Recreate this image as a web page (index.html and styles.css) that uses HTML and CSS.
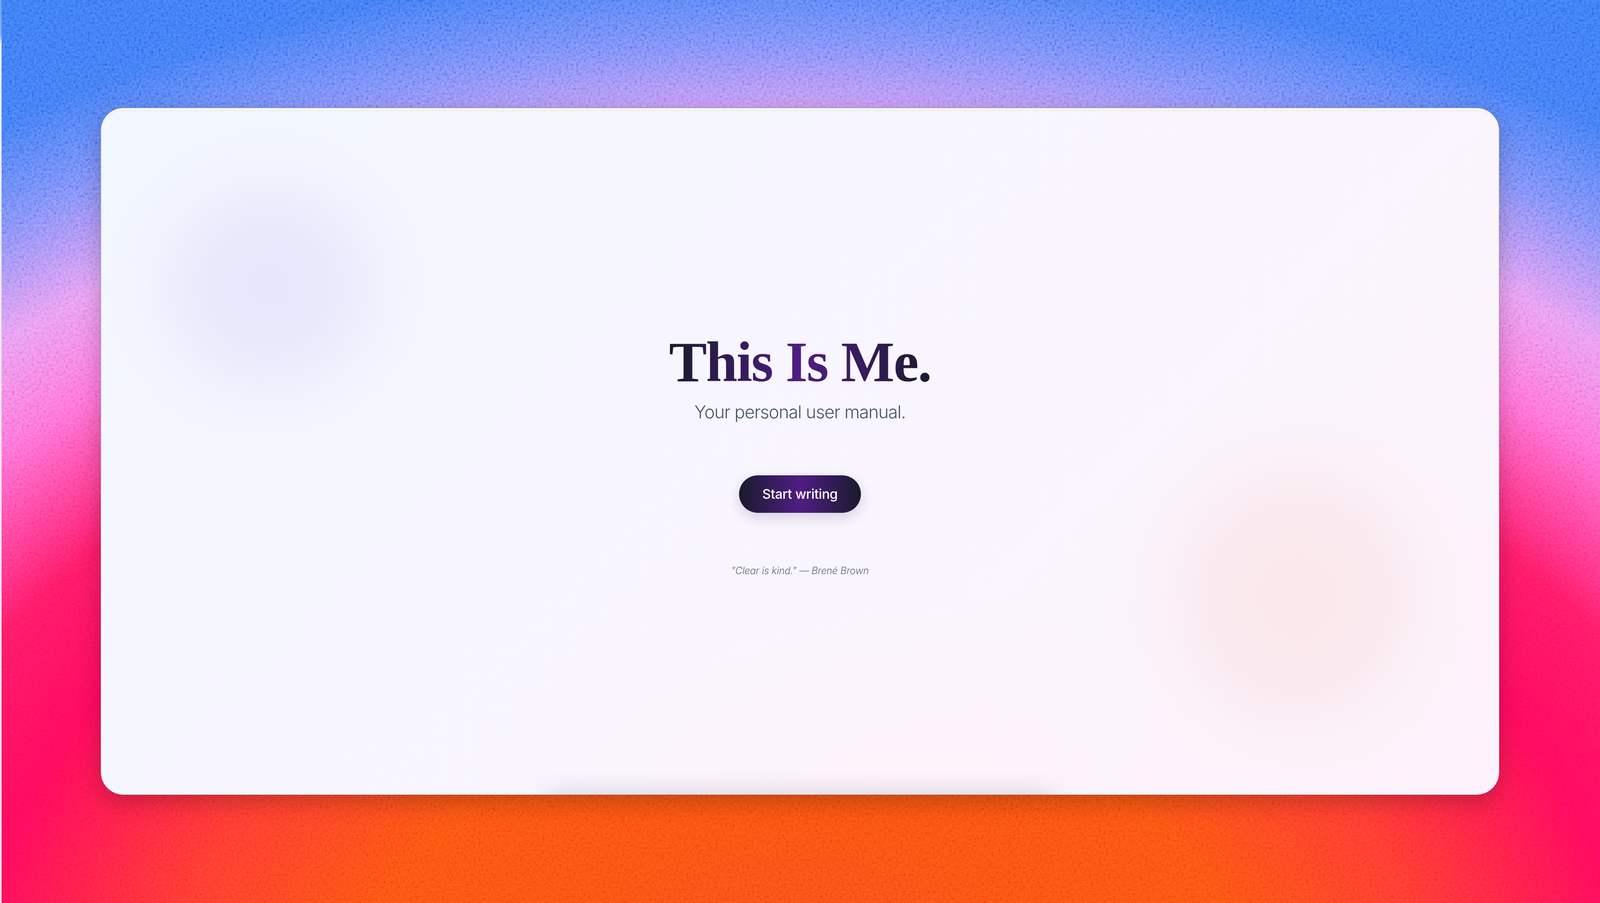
FILE: index.html
```html
<!DOCTYPE html>
<html lang="en">
<head>
    <meta charset="UTF-8">
    <meta name="viewport" content="width=device-width, initial-scale=1.0">
    <title>This Is Me.</title>
    <link rel="stylesheet" href="styles.css">
</head>
<body>

    <svg class="grain" width="100%" height="100%" aria-hidden="true">
        <filter id="grainFilter" x="0" y="0" width="100%" height="100%">
            <feTurbulence type="fractalNoise" baseFrequency="0.16" numOctaves="3"/>
            <feColorMatrix type="matrix" values="1.8 0 0 0 -0.4  1.8 0 0 0 -0.4  1.8 0 0 0 -0.4  0 0 0 0 1"/>
        </filter>
        <rect width="100%" height="100%" filter="url(#grainFilter)"/>
    </svg>

    <div class="edge-strip"></div>

    <main class="page">
        <section class="card">
            <div class="blob blob-blue"></div>
            <div class="blob blob-pink"></div>
            <div class="floor-shadow"></div>

            <div class="hero">
                <h1>This Is Me.</h1>
                <p class="subtitle">Your personal user manual.</p>
                <a href="#" class="start-btn">Start writing</a>
                <p class="quote">"Clear is kind." — Brené Brown</p>
            </div>
        </section>
    </main>

</body>
</html>
```

FILE: styles.css
```css
html, body {
    height: 100%;
}

body {
    position: relative;
    margin: 0;
    overflow: hidden;
    font-family: Inter, "Open Sans", sans-serif;
    background-color: #3b78f5;
    background-image: radial-gradient(ellipse 103.7% 129.8% at 50% 112.5%,
        #f94a22 0%, #fb5012 16%, #fc5212 27%, #ff3a30 38%, #ff0a5a 50%, #ff1a62 58%,
        #ff70d8 68%, #e89cf2 75%, #7c8cf8 83%, #4279f5 90%, #3b78f5 100%);
}

.grain {
    position: absolute;
    top: 0;
    left: 0;
    opacity: 0.22;
    mix-blend-mode: overlay;
}

.edge-strip {
    position: absolute;
    top: 0;
    bottom: 0;
    left: 0;
    width: 4px;
    background: linear-gradient(180deg, #6ea8ff 0, #7fb0ff 90px, #e8eefc 110px, #f3e8f8 50%, #fde6ee 100%);
}

.page {
    position: relative;
    box-sizing: border-box;
    height: 100%;
    padding: 276px 6.31% 277px;
    display: flex;
}

.card {
    position: relative;
    flex: 1;
    display: flex;
    align-items: center;
    justify-content: center;
    overflow: hidden;
    border-radius: 58px;
    background:
        radial-gradient(ellipse 30% 30% at 58% 100%, #fdf3fb 0%, rgba(253, 243, 251, 0) 100%),
        linear-gradient(135deg, #f1f7ff 0%, #f6f6ff 30%, #f9f5fe 60%, #fdf2fb 100%);
    border-top: 7px solid #f8f8f8;
    box-shadow: inset 0 1px 0 #dedfe2;
    outline: 2px solid rgba(90, 90, 100, 0.35);
    outline-offset: -1px;
}

.page::before {
    content: "";
    position: absolute;
    top: 276px;
    right: 6.31%;
    bottom: 277px;
    left: 6.31%;
    border-radius: 58px;
    box-shadow: 0 20px 60px rgba(0, 0, 0, 0.22);
}

.blob {
    position: absolute;
    border-radius: 50%;
}

.blob-blue {
    top: 20px;
    left: -0.5%;
    width: 25%;
    height: 860px;
    background: radial-gradient(closest-side, #e6e7fb 0%, #e8e9fb 35%, rgba(240, 240, 253, 0.6) 70%, rgba(246, 246, 255, 0) 100%);
}

.blob-pink {
    top: 720px;
    right: 0.4%;
    width: 28%;
    height: 1050px;
    background: radial-gradient(closest-side, #fae8eb 0%, #fae9ee 40%, rgba(251, 240, 246, 0.6) 72%, rgba(252, 243, 250, 0) 100%);
}

.floor-shadow {
    position: absolute;
    bottom: -30px;
    left: 32%;
    right: 32%;
    height: 30px;
    box-shadow: 0 0 60px rgba(60, 60, 80, 0.28);
}

.hero {
    position: relative;
    display: flex;
    flex-direction: column;
    align-items: center;
}

h1 {
    margin: 0;
    font-family: "Liberation Serif", serif;
    font-size: 3.55vw;
    font-weight: 700;
    line-height: 170px;
    letter-spacing: -0.063vw;
    background: linear-gradient(90deg, #1a1a2e 0%, #4f1d84 50%, #1a1a2e 100%);
    -webkit-background-clip: text;
    background-clip: text;
    color: transparent;
}

.subtitle {
    margin: 14px 0 0;
    font-size: 1.1vw;
    font-weight: 300;
    line-height: 58px;
    letter-spacing: -0.03vw;
    color: #4a5568;
}

.start-btn {
    display: block;
    margin-top: 133px;
    padding: 24px 1.46vw;
    border-radius: 48px;
    background: linear-gradient(90deg, #1a1a2e 0%, #4f1d84 50%, #1a1a2e 100%);
    color: white;
    font-size: 0.83vw;
    font-weight: 500;
    line-height: 48px;
    letter-spacing: -0.012vw;
    text-decoration: none;
    box-shadow: 0 12px 34px rgba(30, 20, 60, 0.16);
}

.quote {
    margin: 132px 0 0;
    font-size: 0.61vw;
    font-style: italic;
    font-weight: 300;
    line-height: 32px;
    letter-spacing: -0.005vw;
    color: #5f6675;
}
```
